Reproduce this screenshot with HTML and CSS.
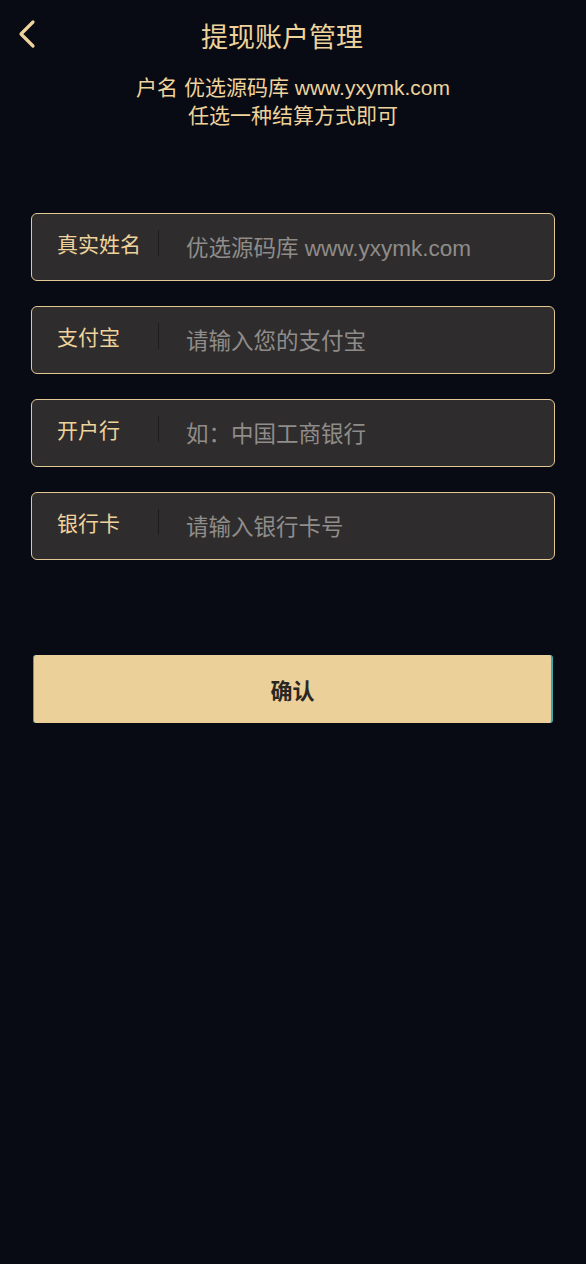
FILE: index.html
```html
<!DOCTYPE html>
<html lang="zh">
<head>
<meta charset="utf-8">
<link rel="stylesheet" href="styles.css">
</head>
<body>
<div class="page">
  <header class="top">
    <svg class="back" width="20" height="30" viewBox="0 0 20 30"><path d="M16 3 L4 15 L16 27" fill="none" stroke="#eed39c" stroke-width="3.2" stroke-linecap="round" stroke-linejoin="round"/></svg>
    <h1 class="title">提现账户管理</h1>
  </header>
  <div class="sub">
    <p>户名 优选源码库 www.yxymk.com</p>
    <p>任选一种结算方式即可</p>
  </div>
  <form class="form">
    <div class="field"><span class="label">真实姓名</span><span class="sep"></span><span class="ph">优选源码库 www.yxymk.com</span></div>
    <div class="field"><span class="label">支付宝</span><span class="sep"></span><span class="ph">请输入您的支付宝</span></div>
    <div class="field"><span class="label">开户行</span><span class="sep"></span><span class="ph">如：中国工商银行</span></div>
    <div class="field"><span class="label">银行卡</span><span class="sep"></span><span class="ph">请输入银行卡号</span></div>
  </form>
  <div class="btnwrap"><button class="btn" type="button">确认</button></div>
</div>
</body>
</html>
```
FILE: styles.css
```css
html, body {
  margin: 0;
  padding: 0;
  background: #080b13;
}
body {
  font-family: "Liberation Sans", "Noto Sans CJK SC", sans-serif;
  color: #eed39c;
}
.page {
  width: 586px;
  min-height: 1264px;
}
.top {
  position: relative;
  height: 74px;
  display: flex;
  justify-content: center;
  padding-right: 22px;
}
.back {
  position: absolute;
  left: 17px;
  top: 19px;
}
.title {
  margin: 0;
  padding-top: 20px;
  font-size: 27px;
  font-weight: normal;
  line-height: 36px;
  color: #eed39c;
}
.sub {
  text-align: center;
  font-size: 21px;
  line-height: 28px;
}
.sub p { margin: 0; }
.form {
  margin: 83px 31px 0 31px;
  display: flex;
  flex-direction: column;
  gap: 25px;
}
.field {
  height: 66px;
  border: 1px solid #e3c893;
  border-radius: 6px;
  background: #2e2c2d;
  display: flex;
  align-items: center;
  padding-left: 25px;
}
.label {
  width: 101px;
  font-size: 21px;
  color: #eed39c;
  margin-top: -8px;
}
.sep {
  width: 1px;
  height: 26px;
  background: #1e1d1e;
  margin-top: -8px;
}
.ph {
  margin-left: 27px;
  font-size: 22.5px;
  color: #8f8c89;
  margin-top: -3px;
}
.btnwrap {
  padding: 95px 33px 0 33px;
}
.btn {
  width: 100%;
  height: 68px;
  border: none;
  border-left: 1px solid #3aa7b5;
  border-right: 2px solid #3aa7b5;
  border-radius: 3px;
  background: #ebd09a;
  color: #2a2723;
  font-family: "Liberation Sans", "Noto Sans CJK SC", sans-serif;
  font-size: 22px;
  font-weight: bold;
  display: block;
}
```
